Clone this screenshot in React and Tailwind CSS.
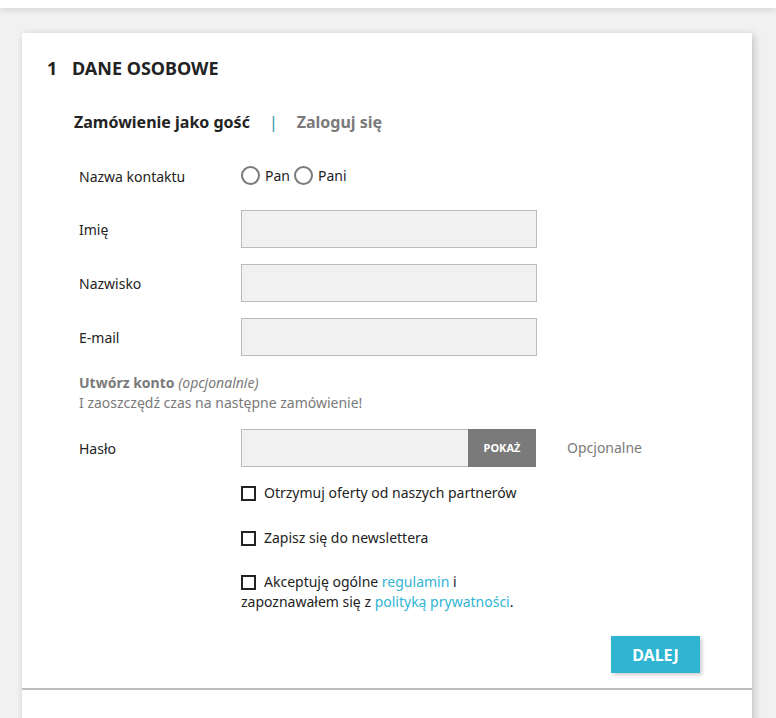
export default function App() {
  const font = { fontFamily: '"Noto Sans", "Open Sans", sans-serif' };
  const Row = ({ label, children }) => (
    <div className="flex items-center h-[38px]">
      <div className="w-[162px] text-[14px] text-[#232323]">{label}</div>
      {children}
    </div>
  );
  const Input = () => (
    <div className="w-[296px] h-[38px] bg-[#f1f1f1] border border-[#bbbbbb]" />
  );
  const Radio = ({ label }) => (
    <label className="flex items-center">
      <span className="inline-block w-[19px] h-[19px] rounded-full border-2 border-[#7a7a7a] bg-white" />
      <span className="ml-[5px] text-[14px] text-[#232323]">{label}</span>
    </label>
  );
  const Box = () => (
    <span className="inline-block w-[15px] h-[15px] border-2 border-[#232323] bg-white align-[-3px] mr-[8px]" />
  );
  return (
    <div style={font} className="min-h-[718px] bg-[#f1f1f1] overflow-hidden">
      <div className="h-[8px] bg-white shadow-[0_2px_6px_rgba(0,0,0,0.12)]" />
      <div className="ml-[22px] mt-[25px] w-[730px] bg-white shadow-[2px_2px_8px_rgba(0,0,0,0.2)]">
        <div className="pt-[23px] pl-[25px] pr-[52px] pb-[15px] border-b-2 border-[#bdbdbd]">
          <h1 className="text-[18px] leading-[24px] font-bold text-[#232323] flex">
            <span className="w-[25px]">1</span>
            <span>DANE OSOBOWE</span>
          </h1>
          <div className="mt-[30px] pl-[27px] flex items-center text-[16px] leading-[24px] font-bold">
            <span className="text-[#232323]">Zamówienie jako gość</span>
            <span className="mx-[19px] font-normal text-[#2592a9]">|</span>
            <span className="text-[#7a7a7a]">Zaloguj się</span>
          </div>
          <div className="pl-[32px]">
            <div className="mt-[23px]">
              <Row label="Nazwa kontaktu">
                <div className="flex items-center gap-[4px] -mt-[2px]">
                  <Radio label="Pan" />
                  <Radio label="Pani" />
                </div>
              </Row>
            </div>
            <div className="mt-[15px] flex flex-col gap-[16px]">
              <Row label="Imię"><Input /></Row>
              <Row label="Nazwisko"><Input /></Row>
              <Row label="E-mail"><Input /></Row>
            </div>
            <div className="mt-[17px] text-[14px] leading-[20px] text-[#7a7a7a]">
              <div>
                <span className="font-bold">Utwórz konto</span> <em>(opcjonalnie)</em>
              </div>
              <div>I zaoszczędź czas na następne zamówienie!</div>
            </div>
            <div className="mt-[16px]">
              <Row label="Hasło">
                <div className="flex h-[38px]">
                  <div className="w-[227px] h-[38px] bg-[#f1f1f1] border border-[#bbbbbb] border-r-0" />
                  <div className="w-[68px] h-[38px] bg-[#7a7a7a] text-white text-[11px] font-bold flex items-center justify-center">
                    POKAŻ
                  </div>
                </div>
                <div className="ml-[31px] -mt-[1px] text-[14px] text-[#7a7a7a]">Opcjonalne</div>
              </Row>
            </div>
            <div className="pl-[162px] text-[14px] leading-[20px] text-[#232323]">
              <div className="mt-[16px]"><Box />Otrzymuj oferty od naszych partnerów</div>
              <div className="mt-[25px]"><Box />Zapisz się do newslettera</div>
              <div className="mt-[24px] w-[296px]">
                <Box />Akceptuję ogólne <span className="text-[#2fb5d2]">regulamin</span> i zapoznawałem się z{" "}
                <span className="text-[#2fb5d2]">polityką prywatności</span>.
              </div>
            </div>
          </div>
          <div className="mt-[24px] flex justify-end">
            <button className="w-[89px] h-[37px] bg-[#2fb5d2] text-white text-[16px] font-bold shadow-[2px_2px_4px_rgba(0,0,0,0.2)]">
              DALEJ
            </button>
          </div>
        </div>
        <div className="h-[40px]" />
      </div>
    </div>
  );
}
